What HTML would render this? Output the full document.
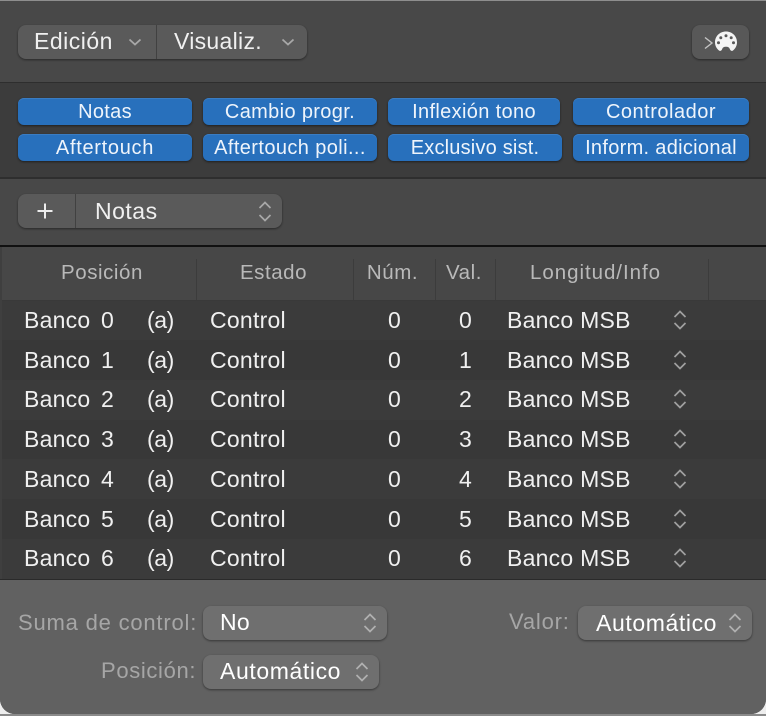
<!DOCTYPE html>
<html><head><meta charset="utf-8">
<style>
html,body{margin:0;padding:0;background:#e8e8e8;}
#w{position:relative;width:766px;height:716px;overflow:hidden;font-family:"Liberation Sans",sans-serif;background:#8a8a8a;}
#c1,#c2{position:absolute;bottom:2px;width:16px;height:16px;background:#eeeeee;}
#c1{left:0}#c2{right:0}
#p{position:absolute;left:0;top:0;width:766px;height:714px;border-radius:0 0 15px 15px;overflow:hidden;background:#484848;}
.a{position:absolute;}
.t{position:absolute;white-space:nowrap;color:#f0f0f0;font-size:23px;line-height:26px;letter-spacing:.25px;}
.x{letter-spacing:-.4px;}
.btn{position:absolute;border-radius:8px;background:#5a5a5a;box-shadow:0 1px 2px rgba(0,0,0,.45);}
.blue{position:absolute;height:27px;border-radius:6px;background:#2870bc;box-shadow:0 1px 2px rgba(0,0,0,.5),inset 0 1px 0 #3a7cc2;color:#eef4fb;font-size:20px;line-height:29px;text-align:center;letter-spacing:.3px;white-space:nowrap;}
.h{position:absolute;top:260px;color:#b9b9b9;font-size:20.5px;line-height:26px;white-space:nowrap;letter-spacing:.55px;text-align:center;}
.r{position:absolute;left:0;width:766px;height:40px;}
.l{position:absolute;color:#a6a6a6;font-size:22px;line-height:26px;white-space:nowrap;letter-spacing:.8px;text-align:right;}
.s{position:absolute;width:1px;background:#3c3c3c;}
svg{position:absolute;overflow:visible;}
</style></head><body>
<div id="w"><div id="c1"></div><div id="c2"></div><div id="p">
<div class="a" style="left:0;top:0;width:766px;height:1px;background:#8e8e8e"></div>
<div class="a" style="left:0;top:1px;width:766px;height:81px;background:#484848"></div>
<div class="a" style="left:0;top:82px;width:766px;height:97px;background:#3c3c3c;border-top:1px solid #2e2e2e;border-bottom:2px solid #2e2e2e;box-sizing:border-box"></div>
<div class="a" style="left:0;top:179px;width:766px;height:66px;background:#484848"></div>
<div class="a" style="left:0;top:245px;width:766px;height:2px;background:#111"></div>

<div class="btn" style="left:18px;top:25px;width:289px;height:34px"></div>
<div class="a" style="left:156px;top:25px;width:1px;height:34px;background:#414141"></div>
<div class="t" style="left:34px;top:28px;letter-spacing:.5px">Edición</div>
<svg style="left:128px;top:38px" width="14" height="8"><path d="M1.5 1.5L7 6.5L12.5 1.5" fill="none" stroke="#a8a8a8" stroke-width="1.8"/></svg>
<div class="t" style="left:174px;top:28px;letter-spacing:.3px">Visualiz.</div>
<svg style="left:281px;top:38px" width="14" height="8"><path d="M1.5 1.5L7 6.5L12.5 1.5" fill="none" stroke="#a8a8a8" stroke-width="1.8"/></svg>

<div class="btn" style="left:692px;top:25px;width:57px;height:34px;background:#585858"></div>
<svg style="left:703px;top:36px" width="12" height="14"><path d="M2 1.5L9 7L2 12.5" fill="none" stroke="#c4c4c4" stroke-width="1.4"/></svg>
<svg style="left:714px;top:31px" width="24" height="22" viewBox="0 0 24 22"><path fill-rule="evenodd" fill="#f4f4f4" d="M12 0.5C5.6 0.5 1 5.3 1 11.2C1 14.6 2.6 17.6 5 19.5C6.5 20.5 7.6 19.6 8.2 18C8.8 16.6 9.5 15.8 12 15.8C14.5 15.8 15.2 16.6 15.8 18C16.4 19.6 17.5 20.5 19 19.5C21.4 17.6 23 14.6 23 11.2C23 5.3 18.4 0.5 12 0.5ZM12 3.2A1.5 1.5 0 1 1 12 6.2A1.5 1.5 0 1 1 12 3.2ZM6.8 5.2A1.5 1.5 0 1 1 6.8 8.2A1.5 1.5 0 1 1 6.8 5.2ZM17.2 5.2A1.5 1.5 0 1 1 17.2 8.2A1.5 1.5 0 1 1 17.2 5.2ZM4.5 10.2A1.5 1.5 0 1 1 4.5 13.2A1.5 1.5 0 1 1 4.5 10.2ZM19.5 10.2A1.5 1.5 0 1 1 19.5 13.2A1.5 1.5 0 1 1 19.5 10.2Z"/></svg>

<div class="blue" style="left:18px;top:98px;width:174px">Notas</div>
<div class="blue" style="left:203px;top:98px;width:174px;letter-spacing:.35px">Cambio progr.</div>
<div class="blue" style="left:388px;top:98px;width:172px;letter-spacing:.35px">Inflexión tono</div>
<div class="blue" style="left:573px;top:98px;width:176px;letter-spacing:.5px">Controlador</div>
<div class="blue" style="left:18px;top:134px;width:174px;letter-spacing:.7px">Aftertouch</div>
<div class="blue" style="left:203px;top:134px;width:174px;letter-spacing:.4px">Aftertouch poli...</div>
<div class="blue" style="left:388px;top:134px;width:174px;letter-spacing:.2px">Exclusivo sist.</div>
<div class="blue" style="left:573px;top:134px;width:176px;letter-spacing:.3px">Inform. adicional</div>

<div class="btn" style="left:18px;top:194px;width:264px;height:34px"></div>
<div class="a" style="left:75px;top:194px;width:1px;height:34px;background:#414141"></div>
<svg style="left:36px;top:202px" width="18" height="18"><path d="M9 1.5V16.5M1.5 9H16.5" fill="none" stroke="#ededed" stroke-width="2"/></svg>
<div class="t" style="left:95px;top:198px;letter-spacing:.5px">Notas</div>
<svg style="left:258px;top:201px" width="14" height="21"><path d="M1.5 7L7 1.5L12.5 7M1.5 14L7 19.5L12.5 14" fill="none" stroke="#a8a8a8" stroke-width="1.7"/></svg>

<div class="a" style="left:0;top:247px;width:766px;height:54px;background:#474747;border-bottom:1px solid #393939;box-sizing:border-box"></div>
<div class="s" style="left:196px;top:259px;height:41px"></div>
<div class="s" style="left:353px;top:259px;height:41px"></div>
<div class="s" style="left:435px;top:259px;height:41px"></div>
<div class="s" style="left:495px;top:259px;height:41px"></div>
<div class="s" style="left:708px;top:259px;height:41px"></div>
<div class="h" style="left:8px;width:188px">Posición</div>
<div class="h" style="left:195px;width:157px">Estado</div>
<div class="h" style="left:353px;width:79px">Núm.</div>
<div class="h" style="left:435px;width:58px">Val.</div>
<div class="h" style="left:495px;width:201px;letter-spacing:.95px">Longitud/Info</div>

<div class="r" style="top:301px;height:39px;background:#3b3b3b"></div>
<div class="r" style="top:340px;background:#383838"></div>
<div class="r" style="top:380px;background:#3b3b3b"></div>
<div class="r" style="top:420px;background:#383838"></div>
<div class="r" style="top:459px;background:#3b3b3b"></div>
<div class="r" style="top:499px;background:#383838"></div>
<div class="r" style="top:539px;height:40px;background:#3b3b3b"></div>
<div class="a" style="left:0;top:247px;width:2px;height:332px;background:#3f3f3f"></div>

<div class="t" style="left:24px;top:307px">Banco</div><div class="t" style="left:101px;top:307px">0</div><div class="t x" style="left:147px;top:307px">(a)</div><div class="t" style="left:210px;top:307px">Control</div><div class="t" style="left:388px;top:307px">0</div><div class="t" style="left:459px;top:307px">0</div><div class="t" style="left:507px;top:307px">Banco MSB</div>
<div class="t" style="left:24px;top:347px">Banco</div><div class="t" style="left:101px;top:347px">1</div><div class="t x" style="left:147px;top:347px">(a)</div><div class="t" style="left:210px;top:347px">Control</div><div class="t" style="left:388px;top:347px">0</div><div class="t" style="left:459px;top:347px">1</div><div class="t" style="left:507px;top:347px">Banco MSB</div>
<div class="t" style="left:24px;top:386px">Banco</div><div class="t" style="left:101px;top:386px">2</div><div class="t x" style="left:147px;top:386px">(a)</div><div class="t" style="left:210px;top:386px">Control</div><div class="t" style="left:388px;top:386px">0</div><div class="t" style="left:459px;top:386px">2</div><div class="t" style="left:507px;top:386px">Banco MSB</div>
<div class="t" style="left:24px;top:426px">Banco</div><div class="t" style="left:101px;top:426px">3</div><div class="t x" style="left:147px;top:426px">(a)</div><div class="t" style="left:210px;top:426px">Control</div><div class="t" style="left:388px;top:426px">0</div><div class="t" style="left:459px;top:426px">3</div><div class="t" style="left:507px;top:426px">Banco MSB</div>
<div class="t" style="left:24px;top:466px">Banco</div><div class="t" style="left:101px;top:466px">4</div><div class="t x" style="left:147px;top:466px">(a)</div><div class="t" style="left:210px;top:466px">Control</div><div class="t" style="left:388px;top:466px">0</div><div class="t" style="left:459px;top:466px">4</div><div class="t" style="left:507px;top:466px">Banco MSB</div>
<div class="t" style="left:24px;top:506px">Banco</div><div class="t" style="left:101px;top:506px">5</div><div class="t x" style="left:147px;top:506px">(a)</div><div class="t" style="left:210px;top:506px">Control</div><div class="t" style="left:388px;top:506px">0</div><div class="t" style="left:459px;top:506px">5</div><div class="t" style="left:507px;top:506px">Banco MSB</div>
<div class="t" style="left:24px;top:545px">Banco</div><div class="t" style="left:101px;top:545px">6</div><div class="t x" style="left:147px;top:545px">(a)</div><div class="t" style="left:210px;top:545px">Control</div><div class="t" style="left:388px;top:545px">0</div><div class="t" style="left:459px;top:545px">6</div><div class="t" style="left:507px;top:545px">Banco MSB</div>

<svg style="left:673px;top:310px" width="14" height="20"><path d="M1.5 7L7 1.5L12.5 7M1.5 13L7 18.5L12.5 13" fill="none" stroke="#a0a0a0" stroke-width="1.7"/></svg>
<svg style="left:673px;top:350px" width="14" height="20"><path d="M1.5 7L7 1.5L12.5 7M1.5 13L7 18.5L12.5 13" fill="none" stroke="#a0a0a0" stroke-width="1.7"/></svg>
<svg style="left:673px;top:389px" width="14" height="20"><path d="M1.5 7L7 1.5L12.5 7M1.5 13L7 18.5L12.5 13" fill="none" stroke="#a0a0a0" stroke-width="1.7"/></svg>
<svg style="left:673px;top:429px" width="14" height="20"><path d="M1.5 7L7 1.5L12.5 7M1.5 13L7 18.5L12.5 13" fill="none" stroke="#a0a0a0" stroke-width="1.7"/></svg>
<svg style="left:673px;top:469px" width="14" height="20"><path d="M1.5 7L7 1.5L12.5 7M1.5 13L7 18.5L12.5 13" fill="none" stroke="#a0a0a0" stroke-width="1.7"/></svg>
<svg style="left:673px;top:509px" width="14" height="20"><path d="M1.5 7L7 1.5L12.5 7M1.5 13L7 18.5L12.5 13" fill="none" stroke="#a0a0a0" stroke-width="1.7"/></svg>
<svg style="left:673px;top:548px" width="14" height="20"><path d="M1.5 7L7 1.5L12.5 7M1.5 13L7 18.5L12.5 13" fill="none" stroke="#a0a0a0" stroke-width="1.7"/></svg>

<div class="a" style="left:0;top:579px;width:766px;height:136px;background:#616161;border-top:1px solid #2a2a2a;box-sizing:border-box"></div>

<div class="l" style="left:18px;top:610px">Suma de control:</div>
<div class="btn" style="left:203px;top:606px;width:184px;height:34px;background:#6f6f6f"></div>
<div class="t" style="left:220px;top:609px;color:#fff">No</div>
<svg style="left:363px;top:613px" width="14" height="20"><path d="M1.5 7L7 1.5L12.5 7M1.5 13L7 18.5L12.5 13" fill="none" stroke="#b0b0b0" stroke-width="1.7"/></svg>

<div class="l" style="left:101px;top:658px;letter-spacing:.65px">Posición:</div>
<div class="btn" style="left:203px;top:655px;width:176px;height:34px;background:#6f6f6f"></div>
<div class="t" style="left:220px;top:658px;color:#fff;letter-spacing:.6px">Automático</div>
<svg style="left:355px;top:662px" width="14" height="20"><path d="M1.5 7L7 1.5L12.5 7M1.5 13L7 18.5L12.5 13" fill="none" stroke="#b0b0b0" stroke-width="1.7"/></svg>

<div class="l" style="left:509px;top:609px">Valor:</div>
<div class="btn" style="left:578px;top:606px;width:174px;height:34px;background:#6f6f6f"></div>
<div class="t" style="left:596px;top:610px;color:#fff;letter-spacing:.6px">Automático</div>
<svg style="left:728px;top:613px" width="14" height="20"><path d="M1.5 7L7 1.5L12.5 7M1.5 13L7 18.5L12.5 13" fill="none" stroke="#b0b0b0" stroke-width="1.7"/></svg>
</div></div>
</body></html>
